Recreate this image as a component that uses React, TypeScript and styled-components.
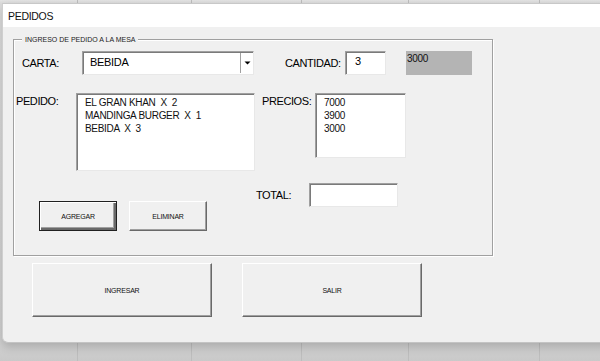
import React from "react";
import styled, { createGlobalStyle, css } from "styled-components";

const GlobalStyle = createGlobalStyle`
  html, body {
    margin: 0;
    padding: 0;
    background: #d6d6d6;
  }
  body {
    font-family: "Liberation Sans", Arial, sans-serif;
    color: #000;
  }
`;

const pedidoItems = ["EL GRAN KHAN  X  2", "MANDINGA BURGER  X  1", "BEBIDA  X  3"];
const precios = ["7000", "3900", "3000"];

function App() {
  return (
    <>
      <GlobalStyle />
      <Desktop>
        <Window>
          <TitleBar>PEDIDOS</TitleBar>
          <Body>
            <Frame>
              <Legend>INGRESO DE PEDIDO A LA MESA</Legend>
              <TopRow>
                <Label $width={60}>CARTA:</Label>
                <Combo>
                  <ComboText>BEBIDA</ComboText>
                  <DropButton>
                    <svg width="7" height="6" viewBox="0 0 7 6">
                      <path d="M0.5 1.5 L6.5 1.5 L3.5 4.5 Z" fill="#000" />
                    </svg>
                  </DropButton>
                </Combo>
                <Label $width={60} $gap={31}>
                  CANTIDAD:
                </Label>
                <TextBox $width={41}>3</TextBox>
                <GrayLabel>3000</GrayLabel>
              </TopRow>
              <ListRow>
                <Label $width={60} $top>
                  PEDIDO:
                </Label>
                <ListBox $width={179} $height={78}>
                  {pedidoItems.map((item) => (
                    <ListItem key={item}>{item}</ListItem>
                  ))}
                </ListBox>
                <Label $width={53} $gap={7} $top>
                  PRECIOS:
                </Label>
                <ListBox $width={91} $height={65}>
                  {precios.map((item) => (
                    <ListItem key={item}>{item}</ListItem>
                  ))}
                </ListBox>
              </ListRow>
              <BottomRow>
                <SmallButtons>
                  <Button $default>AGREGAR</Button>
                  <Button>ELIMINAR</Button>
                </SmallButtons>
                <TotalGroup>
                  <Label $width={53}>TOTAL:</Label>
                  <TextBox $width={89} />
                </TotalGroup>
              </BottomRow>
            </Frame>
            <BigButtons>
              <BigButton>INGRESAR</BigButton>
              <BigButton>SALIR</BigButton>
            </BigButtons>
          </Body>
        </Window>
      </Desktop>
    </>
  );
}

const Desktop = styled.div`
  width: 600px;
  height: 361px;
  overflow: hidden;
  padding: 3px 0 0 2px;
  box-sizing: border-box;
  background:
    linear-gradient(90deg, transparent 77px, #bdbdbd 77px, #bdbdbd 78px, transparent 78px),
    linear-gradient(90deg, transparent 191px, #bdbdbd 191px, #bdbdbd 192px, transparent 192px),
    linear-gradient(90deg, transparent 301px, #bdbdbd 301px, #bdbdbd 302px, transparent 302px),
    linear-gradient(90deg, transparent 408px, #bdbdbd 408px, #bdbdbd 409px, transparent 409px),
    linear-gradient(90deg, transparent 539px, #bdbdbd 539px, #bdbdbd 540px, transparent 540px),
    linear-gradient(180deg, #e4e4e4 0px, #dcdcdc 3px, #d0d0d0 345px, #c9c9c9 361px);
`;

const Window = styled.div`
  width: 640px;
  height: 338px;
  background: #f0f0f0;
  border-top: 1px solid #c8c8c8;
  border-left: 1px solid #cfcfcf;
  border-bottom: 1px solid #c4c4c4;
  border-radius: 0 0 0 6px;
  box-shadow: 0 4px 10px rgba(0, 0, 0, 0.18);
  display: flex;
  flex-direction: column;
  overflow: hidden;
`;

const TitleBar = styled.div`
  height: 23px;
  background: #fff;
  display: flex;
  align-items: center;
  padding-left: 5px;
  font-size: 10.5px;
  letter-spacing: -0.3px;
  color: #111;
`;

const Body = styled.div`
  flex: 1;
  padding: 12px 0 0 10px;
  display: flex;
  flex-direction: column;
`;

const Frame = styled.div`
  position: relative;
  width: 478px;
  height: 204px;
  border: 1px solid #a0a0a0;
  box-shadow: inset 1px 1px 0 #fff, 1px 1px 0 #fff;
  padding: 11px 0 0 0;
  box-sizing: content-box;
  display: flex;
  flex-direction: column;
`;

const Legend = styled.span`
  position: absolute;
  top: -5px;
  left: 8px;
  padding: 0 3px;
  background: #f0f0f0;
  font-size: 7px;
  line-height: 9px;
  color: #222;
`;

const TopRow = styled.div`
  display: flex;
  align-items: center;
  height: 24px;
  padding-left: 8px;
`;

const ListRow = styled.div`
  display: flex;
  align-items: flex-start;
  margin-top: 18px;
  padding-left: 2px;
`;

const BottomRow = styled.div`
  display: flex;
  align-items: flex-start;
  padding-left: 25px;
`;

const Label = styled.div<{ $width: number; $gap?: number; $top?: boolean }>`
  width: ${(p) => p.$width}px;
  margin-left: ${(p) => p.$gap ?? 0}px;
  font-size: 11px;
  letter-spacing: -0.4px;
  white-space: nowrap;
  color: #000;
  ${(p) =>
    p.$top &&
    css`
      align-self: flex-start;
      padding-top: 2px;
    `}
`;

const sunken = css`
  border: 1px solid;
  border-color: #a0a0a0 #e8e8e8 #e8e8e8 #a0a0a0;
  box-shadow: inset 1px 1px 0 #7a7a7a;
  background: #fff;
  box-sizing: border-box;
`;

const Combo = styled.div`
  ${sunken};
  width: 172px;
  height: 24px;
  display: flex;
  align-items: stretch;
`;

const ComboText = styled.div`
  flex: 1;
  padding: 4px 0 0 7px;
  font-size: 11px;
  letter-spacing: -0.3px;
`;

const DropButton = styled.div`
  width: 12px;
  border-left: 1px solid #a0a0a0;
  display: flex;
  align-items: center;
  justify-content: center;
  margin: 1px 0;
`;

const TextBox = styled.div<{ $width: number }>`
  ${sunken};
  width: ${(p) => p.$width}px;
  height: 24px;
  padding: 3px 0 0 9px;
  font-size: 11px;
`;

const GrayLabel = styled.div`
  width: 66px;
  height: 24px;
  margin-left: 20px;
  background: #b4b4b4;
  font-size: 10px;
  letter-spacing: -0.3px;
  padding: 2px 0 0 1px;
  box-sizing: border-box;
  color: #111;
`;

const ListBox = styled.div<{ $width: number; $height: number }>`
  ${sunken};
  width: ${(p) => p.$width}px;
  height: ${(p) => p.$height}px;
  padding: 2px 0 0 8px;
`;

const ListItem = styled.div`
  font-size: 10px;
  line-height: 13px;
  letter-spacing: -0.3px;
  white-space: pre;
  color: #111;
`;

const SmallButtons = styled.div`
  display: flex;
  gap: 12px;
  margin-top: 30px;
`;

const TotalGroup = styled.div`
  display: flex;
  align-items: center;
  margin-top: 12px;
  margin-left: 49px;
`;

const raised = css`
  background: #f0f0f0;
  border: 1px solid;
  border-color: #fff #696969 #696969 #fff;
  box-shadow: inset -1px -1px 0 #a0a0a0;
  box-sizing: border-box;
  display: flex;
  align-items: center;
  justify-content: center;
  font-family: "Liberation Sans", Arial, sans-serif;
  color: #111;
  padding: 0;
`;

const Button = styled.button<{ $default?: boolean }>`
  ${raised};
  width: 78px;
  height: 30px;
  font-size: 7px;
  letter-spacing: -0.2px;
  ${(p) =>
    p.$default &&
    css`
      border: 1px solid #202020;
      box-shadow: inset 1px 1px 0 #fff, inset -2px -2px 0 #696969, inset -3px -3px 0 #a0a0a0;
    `}
`;

const BigButtons = styled.div`
  display: flex;
  gap: 30px;
  margin-top: 7px;
  padding-left: 19px;
`;

const BigButton = styled.button`
  ${raised};
  width: 180px;
  height: 54px;
  font-size: 7px;
  letter-spacing: -0.2px;
`;

export default App;
